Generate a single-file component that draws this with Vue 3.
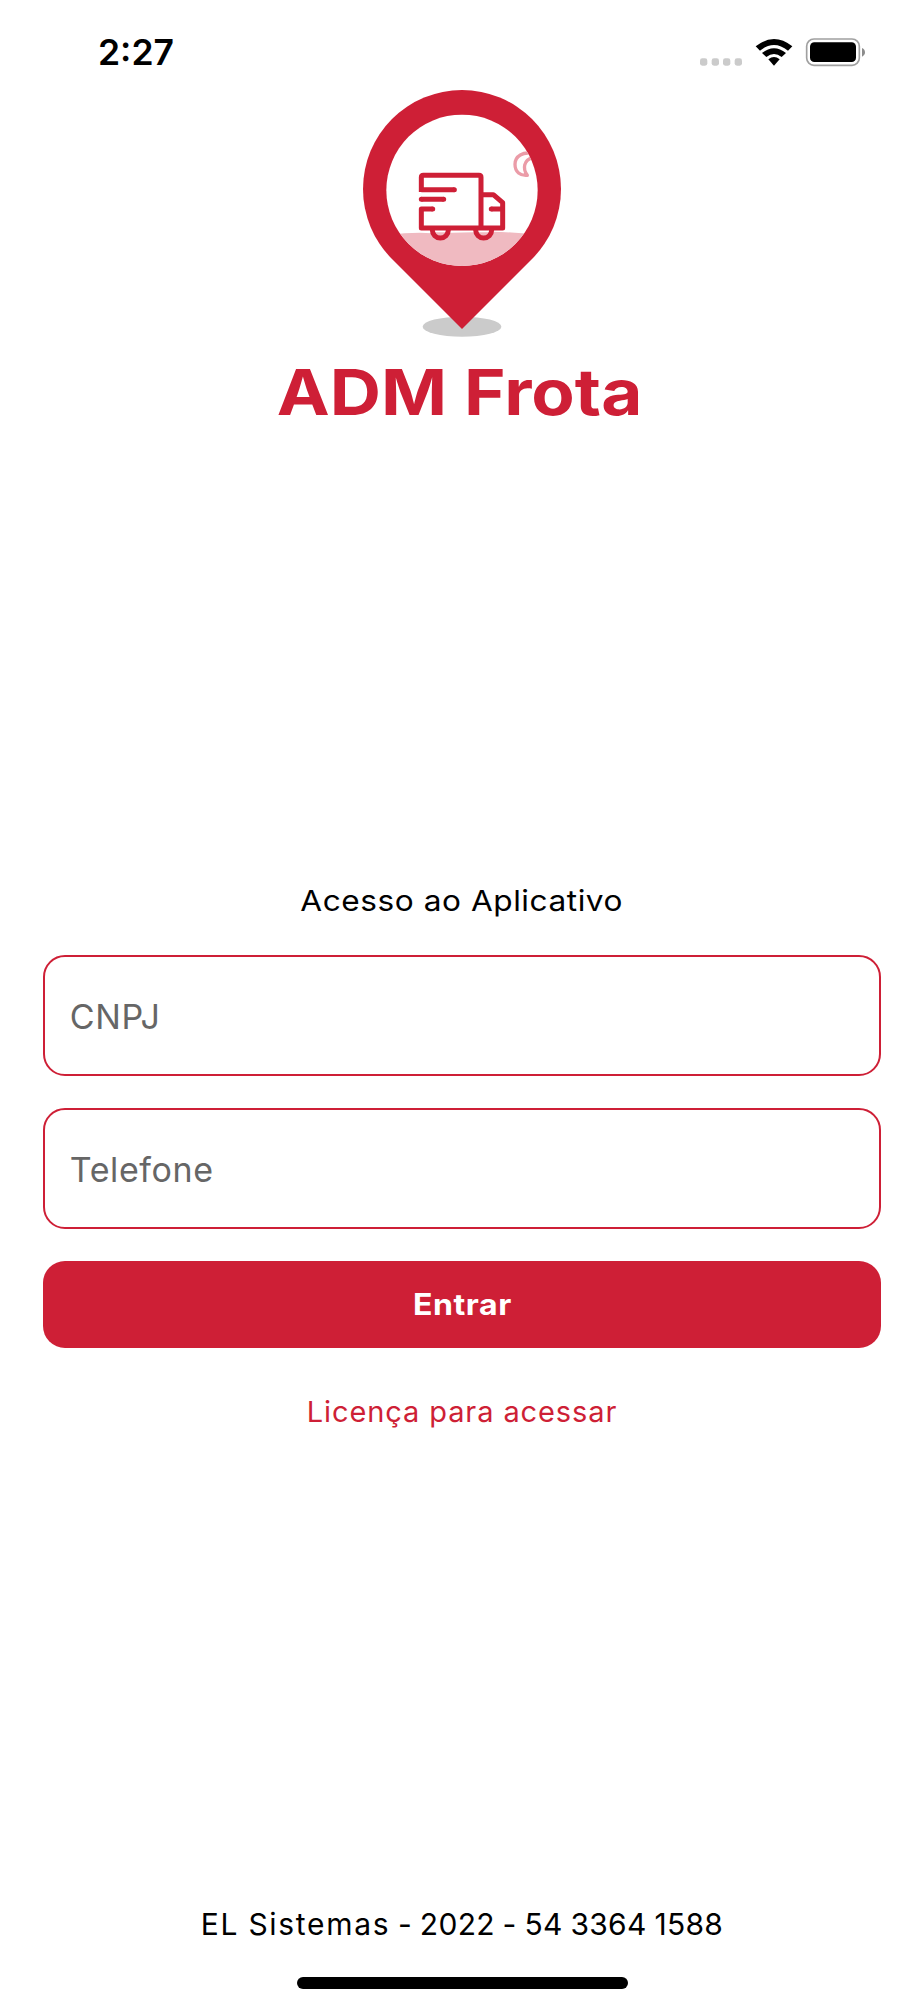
<script setup>
import { ref } from "vue";

// variables
const cnpj = ref("");
const telefone = ref("");

// functions
function entrar() {
}
function abrirLicenca() {
}
</script>
<template>
  <div class="screen">
    <header class="statusBar">
      <span class="time">2:27</span>
      <svg class="statusIcons" viewBox="0 0 600 180">
        <g fill="#cbcbcb">
          <rect x="60" y="115" width="22" height="22" rx="7" />
          <rect x="95" y="115" width="22" height="22" rx="7" />
          <rect x="129" y="115" width="22" height="22" rx="7" />
          <rect x="164" y="115" width="22" height="22" rx="7" />
        </g>
        <path d="M227 79Q282 35 337 79L324 92Q282 58 240 92Z" />
        <path d="M246 99Q282 70 318 99L305 111Q282 93 259 111Z" />
        <path d="M265 118Q282 104 299 118L282 137Z" />
        <rect x="380" y="57" width="158" height="79" rx="22" fill="none" stroke="#a0a0a0" stroke-width="5" />
        <rect x="390" y="67" width="138" height="59" rx="13" />
        <path d="M546 84Q555 88 555 97Q555 106 546 110Z" fill="#8c8c8c" />
      </svg>
    </header>

    <div class="brand">
      <svg class="pin" viewBox="0 0 672 795">
        <defs>
          <clipPath id="hole">
            <circle cx="336" cy="331" r="227" />
          </clipPath>
        </defs>
        <ellipse cx="336" cy="740" rx="118" ry="30" fill="#cbcbcb" />
        <path d="M126 537A297 297 0 1 1 546 537L336 747Z" fill="#ce1f36" />
        <circle cx="336" cy="331" r="227" fill="#fff" />
        <g clip-path="url(#hole)">
          <path d="M100 467Q190 455 245 460L430 455Q490 456 580 467V580H100Z" fill="#f0bac1" />
          <path
            d="M548 221C520 214 495 228 495 253C495 277 511 288 532 286C517 266 521 240 548 233"
            fill="none" stroke="#eb9ca8" stroke-width="10" stroke-linejoin="round"
          />
        </g>
        <path d="M247 450A24 24 0 0 0 295 450Z" fill="#fff" />
        <path d="M377 450A24 24 0 0 0 425 450Z" fill="#fff" />
        <path d="M247 457A24 24 0 0 0 295 457Z" fill="#f0bac1" />
        <path d="M377 457A24 24 0 0 0 425 457Z" fill="#f0bac1" />
        <g fill="none" stroke="#ce1f36" stroke-width="15" stroke-linejoin="round">
          <path d="M214 336V292Q214 286 220 286H387Q393 286 393 292V444" />
          <path d="M214 329H313M214 358H281M248 387H214V444H458V368L430 344H393M458 387H424" />
          <path d="M313 329h.1M281 358h.1M214 358h-.1M248 387h.1M424 387h-.1" stroke-linecap="round" />
          <path d="M247 450A24 24 0 0 0 295 450M377 450A24 24 0 0 0 425 450" />
        </g>
      </svg>
      <h1>ADM Frota</h1>
    </div>

    <form class="login" @submit.prevent="entrar">
      <h2>Acesso ao Aplicativo</h2>
      <input v-model="cnpj" type="text" placeholder="CNPJ" />
      <input v-model="telefone" type="text" placeholder="Telefone" />
      <button class="entrar" type="submit"><span>Entrar</span></button>
      <button class="licenca" type="button" @click="abrirLicenca">Licença para acessar</button>
    </form>

    <footer>
      <p><span class="company">EL Sistemas</span> - 2022 - 54 3364 1588</p>
      <div class="homeBar"></div>
    </footer>
  </div>
</template>

<style>
body {
  margin: 0;
  background: #fff;
}
</style>

<style scoped>
.screen {
  display: flex;
  flex-direction: column;
  box-sizing: border-box;
  width: 924px;
  height: 2000px;
  overflow: hidden;
  background: #fff;
  color: #000;
  font-family: Inter, "Liberation Sans", sans-serif;
}

.statusBar {
  display: flex;
  justify-content: space-between;
  height: 60px;
  padding: 20px 44px 0 98px;
}
.time {
  font-size: 35.5px;
  font-weight: 600;
  line-height: 66px;
}
.statusIcons {
  width: 200px;
  height: 60px;
}

.brand {
  display: flex;
  flex-direction: column;
  align-items: center;
}
.pin {
  width: 224px;
  height: 265px;
}
h1 {
  margin: 7px 4px 0 0;
  color: #ce1f36;
  font-size: 63.5px;
  font-weight: 700;
  line-height: 80px;
  white-space: nowrap;
  transform: scaleX(1.117);
}

.login {
  display: flex;
  flex-direction: column;
  margin: 448.5px 43.3px 0;
}
h2 {
  margin: 0 0 34.5px;
  font-size: 29px;
  font-weight: 400;
  line-height: 40px;
  letter-spacing: 0.5px;
  text-align: center;
  transform: scaleX(1.09);
}
input {
  box-sizing: border-box;
  height: 121px;
  margin: 0 0 32px;
  padding: 2px 25px 0 24.5px;
  border: 2px solid #ce1f36;
  border-radius: 22px;
  outline: none;
  background: #fff;
  font-family: inherit;
  font-size: 34px;
  letter-spacing: 0.6px;
}
input::placeholder {
  color: #666;
  opacity: 1;
}
button {
  padding: 0;
  border: 0;
  font-family: inherit;
  cursor: pointer;
}
.entrar {
  height: 86.5px;
  border-radius: 22px;
  background: #ce1f36;
  color: #fff;
  font-size: 29.5px;
  font-weight: 700;
  letter-spacing: 0.5px;
}
.entrar span {
  display: inline-block;
  transform: scaleX(1.087);
}
.licenca {
  align-self: center;
  margin-top: 44px;
  background: none;
  color: #ce1f36;
  font-size: 29px;
  line-height: 40px;
  letter-spacing: 0.9px;
}

footer {
  display: flex;
  flex-direction: column;
  align-items: center;
  margin-top: auto;
  padding-bottom: 11px;
}
footer p {
  margin: 0 0 33px;
  font-size: 30px;
  line-height: 40px;
  letter-spacing: 0.3px;
  word-spacing: -1px;
}
.company {
  letter-spacing: 1.7px;
}
.homeBar {
  width: 331px;
  height: 12px;
  border-radius: 6px;
  background: #000;
}
</style>
